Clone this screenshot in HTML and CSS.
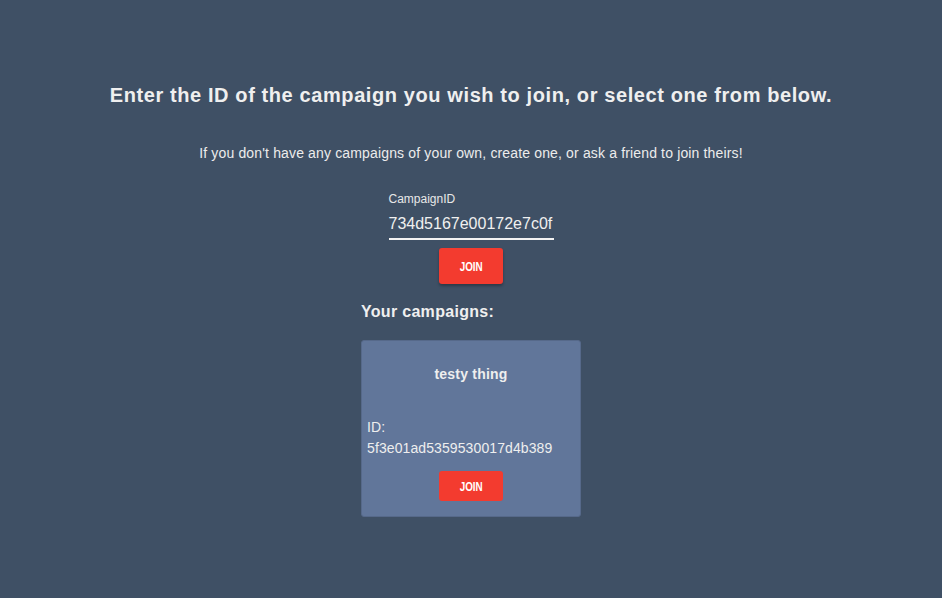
FILE: index.html
```html
<!DOCTYPE html>
<html>
<head>
<meta charset="utf-8">
<link rel="stylesheet" href="styles.css">
</head>
<body>
<main class="page">
  <h1 class="title">Enter the ID of the campaign you wish to join, or select one from below.</h1>
  <p class="subtitle">If you don't have any campaigns of your own, create one, or ask a friend to join theirs!</p>
  <div class="field">
    <label class="field-label">CampaignID</label>
    <div class="field-value">734d5167e00172e7c0f</div>
  </div>
  <button class="join join-main"><span class="join-text">JOIN</span></button>
  <section class="campaigns">
    <h2 class="campaigns-title">Your campaigns:</h2>
    <div class="card">
      <div class="card-name">testy thing</div>
      <div class="card-id">ID:<br>5f3e01ad5359530017d4b389</div>
      <button class="join join-card"><span class="join-text">JOIN</span></button>
    </div>
  </section>
</main>
</body>
</html>
```
FILE: styles.css
```css
html, body {
  margin: 0;
  padding: 0;
  background: #3f5065;
  height: 100%;
}
body {
  font-family: "Liberation Sans", Arial, sans-serif;
  color: #ececec;
}
.page {
  display: flex;
  flex-direction: column;
  align-items: center;
  padding-top: 84px;
}
.title {
  margin: 0;
  font-size: 20px;
  font-weight: bold;
  line-height: 23px;
  letter-spacing: 0.6px;
  color: #efefef;
}
.subtitle {
  margin: 0;
  margin-top: 38px;
  font-size: 14px;
  line-height: 16px;
  letter-spacing: 0.15px;
  color: #ececec;
}
.field {
  margin-top: 31px;
  width: 165px;
  display: flex;
  flex-direction: column;
}
.field-label {
  font-size: 12px;
  line-height: 14px;
  color: #e8e8e8;
}
.field-value {
  margin-top: 9px;
  font-size: 16px;
  line-height: 18px;
  padding-bottom: 5px;
  border-bottom: 2px solid #f2f2f2;
  color: #f0f0f0;
}
.join {
  border: none;
  background: #f33b2f;
  color: #fff;
  border-radius: 3px;
  width: 64px;
  padding: 0;
  display: flex;
  align-items: center;
  justify-content: center;
}
.join-text {
  display: inline-block;
  font-family: "Liberation Sans", Arial, sans-serif;
  font-weight: bold;
  font-size: 13px;
  line-height: 13px;
  transform: scaleX(0.76);
}
.join-main {
  margin-top: 8px;
  height: 36px;
  box-shadow: 0 2px 3px rgba(0,0,0,0.3);
}
.campaigns {
  margin-top: 19px;
  width: 220px;
  display: flex;
  flex-direction: column;
}
.campaigns-title {
  margin: 0;
  font-size: 16px;
  font-weight: bold;
  line-height: 18px;
  letter-spacing: 0.3px;
  color: #efefef;
}
.card {
  margin-top: 19px;
  background: #61769a;
  border: 1px solid #56698a;
  border-radius: 3px;
  height: 177px;
  box-sizing: border-box;
  display: flex;
  flex-direction: column;
  align-items: center;
  padding: 24px 5px 0;
}
.card-name {
  font-size: 14px;
  font-weight: bold;
  line-height: 18px;
  letter-spacing: 0.2px;
  color: #eeeeee;
}
.card-id {
  align-self: stretch;
  margin-top: 34px;
  font-size: 14px;
  line-height: 21px;
  letter-spacing: 0.1px;
  color: #eeeeee;
}
.join-card {
  margin-top: 12px;
  height: 30px;
}
```
